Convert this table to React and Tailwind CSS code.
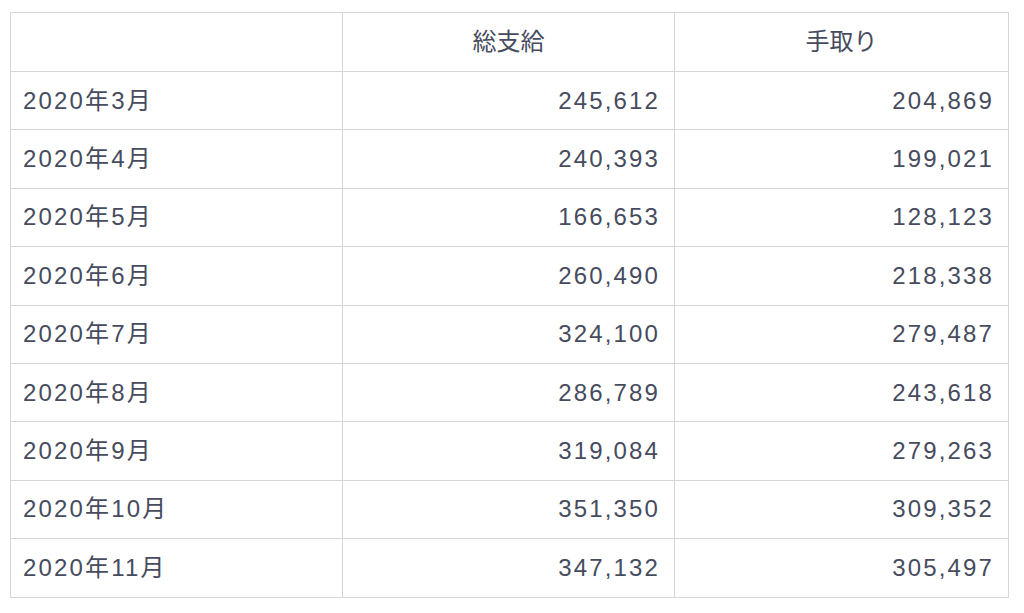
export default function App() {
  const rows = [
    ["2020年3月", "245,612", "204,869"],
    ["2020年4月", "240,393", "199,021"],
    ["2020年5月", "166,653", "128,123"],
    ["2020年6月", "260,490", "218,338"],
    ["2020年7月", "324,100", "279,487"],
    ["2020年8月", "286,789", "243,618"],
    ["2020年9月", "319,084", "279,263"],
    ["2020年10月", "351,350", "309,352"],
    ["2020年11月", "347,132", "305,497"],
  ];
  const font = { fontFamily: '"Liberation Sans", "Noto Sans CJK JP", sans-serif' };
  return (
    <div className="w-[1024px] h-[613px] bg-white pt-[12px] pl-[10px]" style={font}>
      <table className="w-[998px] table-fixed border-collapse text-[24px] text-[#464b5e]">
        <colgroup>
          <col className="w-[332px]" />
          <col className="w-[332px]" />
          <col className="w-[334px]" />
        </colgroup>
        <thead>
          <tr className="h-[59px]">
            <th className="border border-[#d6d6d6] font-normal"></th>
            <th className="border border-[#d6d6d6] font-normal text-center">総支給</th>
            <th className="border border-[#d6d6d6] font-normal text-center">手取り</th>
          </tr>
        </thead>
        <tbody>
          {rows.map((r) => (
            <tr key={r[0]} className="h-[58.4px]">
              <td className="border border-[#d6d6d6] pl-[12px] tracking-[0.09em]">{r[0]}</td>
              <td className="border border-[#d6d6d6] pr-[14px] text-right tracking-[0.09em]">{r[1]}</td>
              <td className="border border-[#d6d6d6] pr-[14px] text-right tracking-[0.09em]">{r[2]}</td>
            </tr>
          ))}
        </tbody>
      </table>
    </div>
  );
}
